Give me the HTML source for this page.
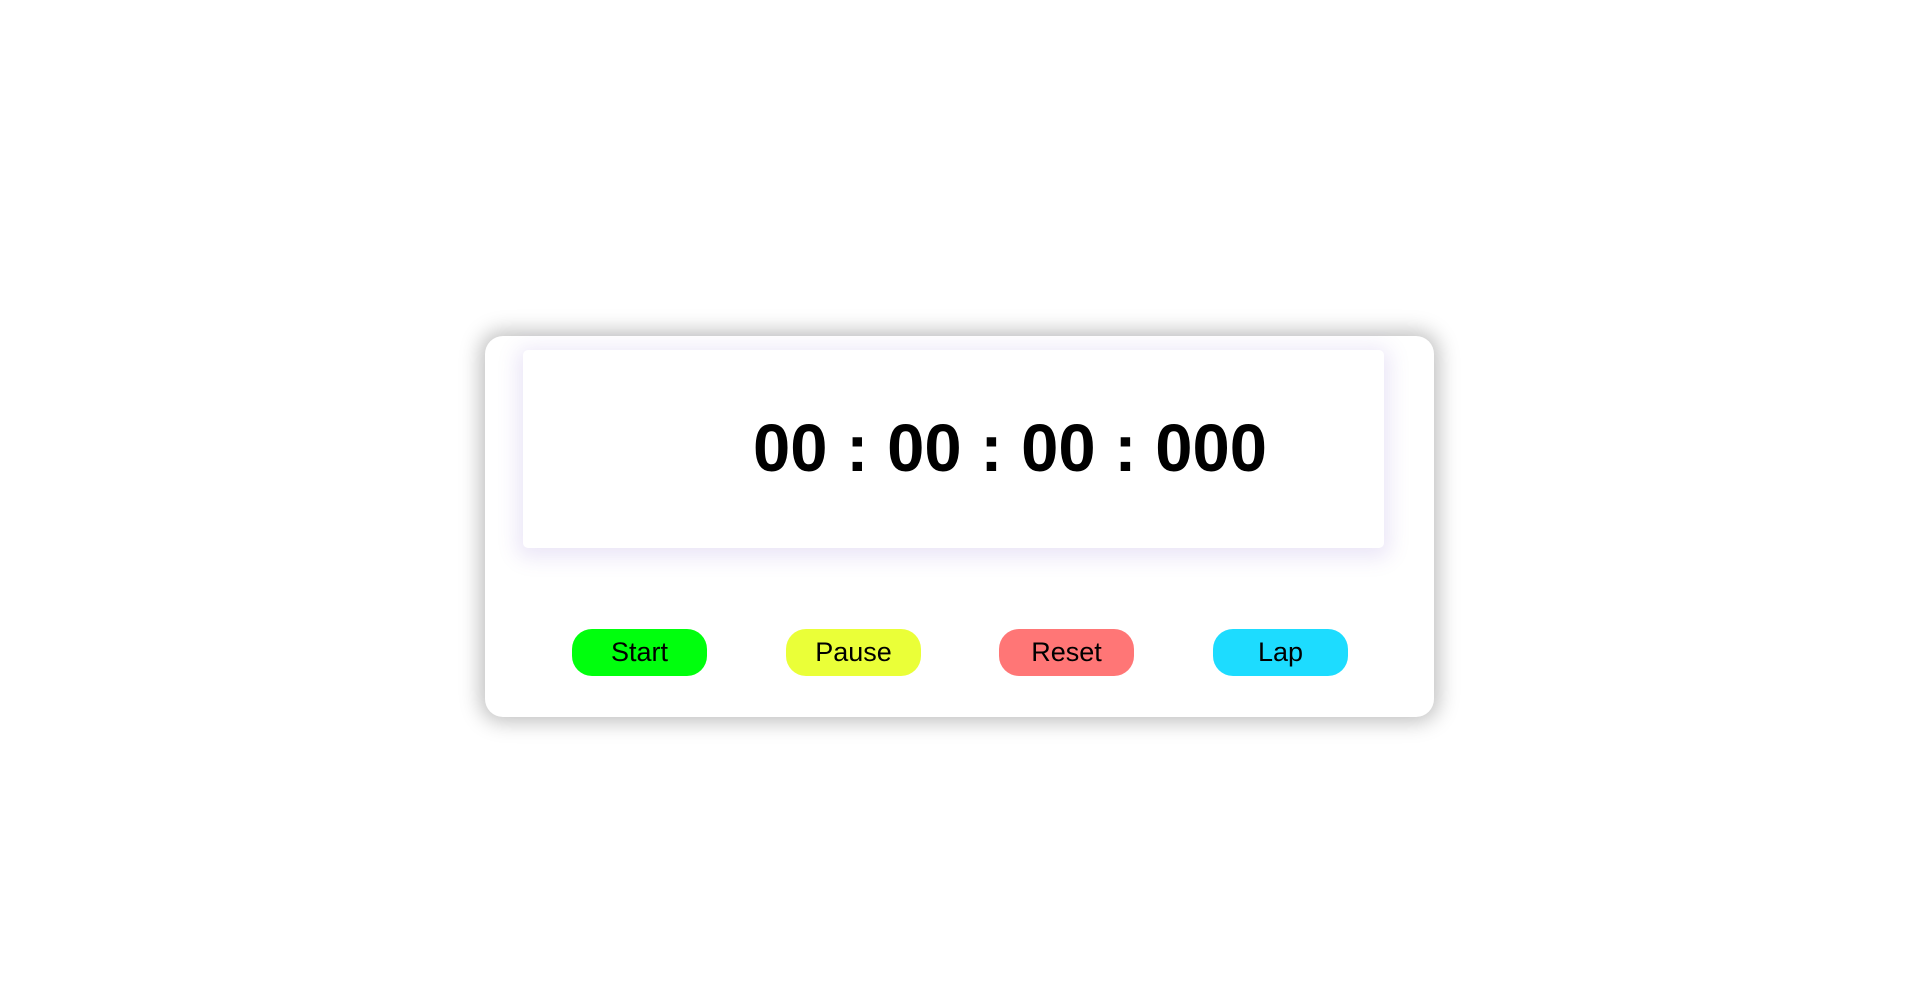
<!DOCTYPE html>
<html><head><style>
html,body{margin:0;padding:0;background:#fff;width:1918px;height:987px;overflow:hidden;font-family:"Liberation Sans",Arial,sans-serif;}
.card{position:absolute;left:485px;top:336px;width:949px;height:381px;background:#fff;border-radius:18px;box-shadow:0 0 20px 5px rgba(0,0,0,0.25);}
.disp{position:absolute;left:523px;top:350px;width:861px;height:198px;background:#fff;border-radius:5px;box-shadow:0 4px 20px 6px rgba(120,90,200,0.15);}
.time{position:absolute;left:753px;top:404px;font-size:67px;font-weight:bold;line-height:90px;color:#000;white-space:pre;}
.btn{position:absolute;top:629px;width:135px;height:47px;border-radius:20px;font-size:27px;line-height:47px;text-align:center;color:#000;}
</style></head><body>
<div class="card"></div>
<div class="disp"></div>
<div class="time">00 : 00 : 00 : 000</div>
<div class="btn" style="left:572px;background:#00ff0d">Start</div>
<div class="btn" style="left:786px;background:#eaff38">Pause</div>
<div class="btn" style="left:999px;background:#ff7676">Reset</div>
<div class="btn" style="left:1213px;background:#1ddcff">Lap</div>
</body></html>
